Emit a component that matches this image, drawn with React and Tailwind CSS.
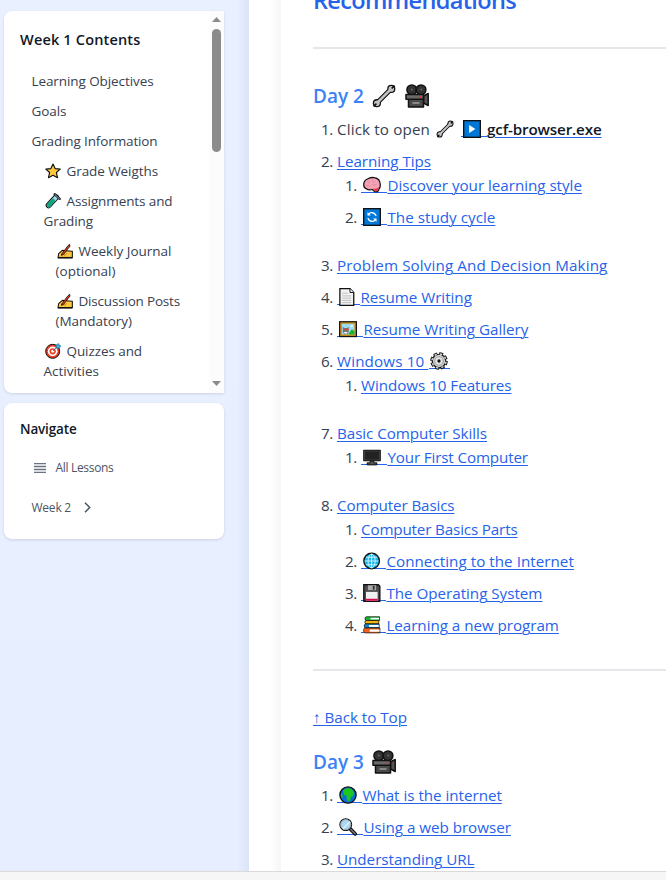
import { useLayoutEffect, useRef } from "react";

const K = "#111111";

const drawings = {
  star: (
    <path d="M12 1.5l3.2 6.9 7.6.8-5.7 5.1 1.7 7.7L12 18.3 5.2 22l1.7-7.7-5.7-5.1 7.6-.8z" fill="#ffc83d" stroke={K} strokeWidth="1.7" strokeLinejoin="round" />
  ),
  tube: (
    <g strokeLinejoin="round" strokeLinecap="round">
      <path d="M16.500 6.500L5.500 18.500" stroke={K} strokeWidth="9" />
      <path d="M16.500 6.500L5.500 18.500" stroke="#a7d8f0" strokeWidth="6" />
      <path d="M12 11.500L5.500 18.500" stroke="#10a37c" strokeWidth="6" />
      <path d="M14.500 1.800l7.500 7" stroke={K} strokeWidth="3.400" />
      <path d="M14.800 2.200l6.900 6.400" stroke="#a7d8f0" strokeWidth="1.200" />
    </g>
  ),
  writing: (
    <g strokeLinejoin="round">
      <path d="M1.500 22l1-6 5.500-5 5 .5 10 1V22z" fill="#ffc83d" stroke={K} strokeWidth="1.600" />
      <path d="M1.500 22h21.500" stroke={K} strokeWidth="2.200" />
      <path d="M7 16.500L16.500 4l2.500-2 .3 2.800L9.500 17.500l-3 1z" fill="#f03a17" stroke={K} strokeWidth="1.300" />
      <path d="M10.500 18.500c2-.5 3-1.500 4-3" stroke="#b06a12" strokeWidth="1.200" fill="none" />
    </g>
  ),
  target: (
    <g>
      <circle cx="11.500" cy="12.500" r="10.500" fill="#ee3b22" stroke={K} strokeWidth="1.500" />
      <circle cx="11.500" cy="12.500" r="7.300" fill="#fff" />
      <circle cx="11.500" cy="12.500" r="4.700" fill="#ee3b22" />
      <circle cx="11.500" cy="12.500" r="2.200" fill="#fff" />
      <path d="M12 12l5-5-.5-4 4-2 .5 2.500 2.500.5-2 4-4-.5" fill="#35b8ea" stroke="#1b5f83" strokeWidth="1" />
    </g>
  ),
  wrench: (
    <g strokeLinejoin="round" strokeLinecap="round">
      <path d="M5.500 18.500L18.500 5.500" stroke={K} strokeWidth="4.800" />
      <circle cx="19.300" cy="4.900" r="4.100" fill={K} />
      <circle cx="4.900" cy="19.200" r="4.100" fill={K} />
      <circle cx="19.300" cy="4.900" r="2.800" fill="#c3c3c3" />
      <circle cx="4.900" cy="19.200" r="2.800" fill="#c3c3c3" />
      <path d="M6 18L18 6" stroke="#c3c3c3" strokeWidth="2.500" />
      <path d="M20.300 3.900L22 2.200M3.900 20.200L2.200 21.900" stroke={K} strokeWidth="1.800" />
    </g>
  ),
  camera: (
    <g stroke={K} strokeWidth="1.500" strokeLinejoin="round">
      <circle cx="6.800" cy="5.800" r="4.900" fill="#333" />
      <circle cx="16" cy="5.800" r="4.900" fill="#333" />
      <path d="M18.500 12l4.700-2.500v12l-4.700-2.500z" fill="#555" />
      <path d="M3.500 15h15v8h-15z" fill="#4a4a4a" />
      <path d="M1 10.500h17.500v4.800H1z" fill="#6a6a6a" />
      <path d="M7.500 19h7" stroke="#aaa" strokeWidth="1.300" />
      <circle cx="15.500" cy="13" r="1" fill="#e33" stroke="none" />
      <path d="M6 5.500h1.500M15.500 5.500H17" stroke="#777" />
    </g>
  ),
  play: (
    <g>
      <rect x=".9" y=".9" width="22.200" height="22.200" fill="#0078d7" stroke={K} strokeWidth="1.800" />
      <path d="M8.200 6.800v10.400l8.300-5.200z" fill="#fff" />
    </g>
  ),
  cycle: (
    <g fill="none">
      <rect x=".9" y=".9" width="22.200" height="22.200" fill="#0078d7" stroke={K} strokeWidth="1.800" />
      <path d="M17.500 10.500A6 6 0 0 0 7 8.500M6.500 13.500A6 6 0 0 0 17 15.500" stroke="#fff" strokeWidth="1.900" />
      <path d="M6 5.500V10h4.500zM18 18.500V14h-4.500z" fill="#fff" />
    </g>
  ),
  brain: (
    <g strokeLinejoin="round">
      <path d="M1 12C.8 8 2.500 5.500 6 4c3-2 6-2.400 9-1.700 4.500.8 7.800 4.200 8 8.700.3 3-.3 4.700-1.700 6-.3 2.800-1.500 4.300-4 4.300-2 0-3.500-1.500-4.800-3.300-3 .8-6 .6-8-1C2.500 16.300 1 14.500 1 12z" fill="#f4a3b5" stroke={K} strokeWidth="1.700" />
      <path d="M13 17c3 .5 5.500-.5 8-2 0 3-1 5.500-3.700 5.500-1.800 0-3.200-1.500-4.300-3.500z" fill="#e0394c" />
      <path d="M5.500 8c1.500 1 3 .5 4-.5M12 5c0 2 1.500 3 3.500 2.500M4 13c2-.8 4 .2 5 1.500M12.500 11.500c2 1 4.500.6 6-1" stroke="#de7f94" strokeWidth="1.100" fill="none" />
    </g>
  ),
  page: (
    <g>
      <path d="M2.500.9h13.500l5 5v17.200H2.500z" fill="#f2f2f2" stroke={K} strokeWidth="1.700" />
      <path d="M16 1v5h5" fill="#fff" stroke={K} strokeWidth="1.300" />
      <path d="M5.500 7H13M5.500 10.500h12M5.500 13.500h12M5.500 16.500h12M5.500 19.500h12" stroke="#b5b5b5" strokeWidth="1.100" />
    </g>
  ),
  picture: (
    <g>
      <rect x=".8" y="2.300" width="22.400" height="19.800" fill="#c98a1c" stroke={K} strokeWidth="1.600" />
      <rect x="3.800" y="5" width="16.600" height="14.200" fill="#9bdcf5" />
      <path d="M12 19.200l5-7 3.400 2.500v4.500z" fill="#16b72b" />
      <circle cx="17" cy="8" r="1.500" fill="#fff" />
      <path d="M5 9l2 1.500h4L13 9v7l-2 3H7l-2-3z" fill="#777" />
      <path d="M5.500 12.500h7" stroke="#e83d30" strokeWidth="1.800" />
      <path d="M7 16h4v2H7z" fill="#fff" />
    </g>
  ),
  gear: (
    <g>
      <circle cx="12" cy="12" r="9.600" fill="none" stroke={K} strokeWidth="4.200" strokeDasharray="5.040 2.500" />
      <circle cx="12" cy="12" r="9" fill="#cfcfcf" stroke={K} strokeWidth="1.600" />
      <circle cx="12" cy="12" r="9.400" fill="none" stroke="#cfcfcf" strokeWidth="2" strokeDasharray="3.100 4.280" strokeDashoffset="-.9" />
      <circle cx="12" cy="12" r="5.600" fill="#e7e7e7" stroke="#888" strokeWidth="1" />
      <circle cx="12" cy="12" r="2.200" fill={K} />
    </g>
  ),
  monitor: (
    <g>
      <rect x=".2" y="2.400" width="23.600" height="15.200" rx="1" fill={K} />
      <rect x="1.900" y="4" width="20.200" height="12" fill="#222" stroke="#555" strokeWidth=".8" />
      <path d="M9.500 17.500h5v2.300h4v2.700h-13v-2.700h4z" fill="#555" stroke={K} strokeWidth="1.300" />
    </g>
  ),
  globe: (
    <g fill="none">
      <circle cx="11.500" cy="12" r="10.400" fill="#16b6e8" stroke={K} strokeWidth="1.800" />
      <g stroke="#e8faff" strokeWidth="1.100">
        <ellipse cx="11.500" cy="12" rx="4.700" ry="9.300" />
        <path d="M11.500 2.500v19M2.200 12h18.600M4 7h15M4 17h15" />
      </g>
    </g>
  ),
  floppy: (
    <g>
      <path d="M1 1h19.500l2 2v20H1z" fill="#4b4b4b" stroke={K} strokeWidth="1.700" />
      <path d="M6.500 1.700h11v6.500h-11z" fill="#aaa" />
      <path d="M13 2.500h2.500v5H13z" fill="#333" />
      <path d="M4 10.500h15.500v12H4z" fill="#f1f1f1" />
      <path d="M4 19.700h15.500v2.700H4z" fill="#d40b4c" />
    </g>
  ),
  books: (
    <g stroke={K} strokeWidth="1" strokeLinejoin="round">
      <path d="M4.500 1H22v5H4.500C2 6 2 1 4.500 1z" fill="#17b52f" />
      <path d="M10 3.500h11.500" stroke="#fff" strokeWidth="2.200" />
      <path d="M4 6h17v4.500H4C2 10.500 2 6 4 6z" fill="#f0b413" />
      <path d="M3.500 10.500h18V16h-18c-2.500 0-2.500-5.500 0-5.500z" fill="#1683c9" />
      <path d="M8 13.300h13" stroke="#fff" strokeWidth="2.600" />
      <path d="M3 16h19.500v6.500H3c-3 0-3-6.500 0-6.500z" fill="#f1641e" />
      <path d="M9 19.500h13" stroke="#fff" strokeWidth="3" />
    </g>
  ),
  earth: (
    <g>
      <circle cx="12" cy="12" r="10.800" fill="#0a6fd6" />
      <path d="M5.500 6C8 3 13 2 16.500 4L20 8l-1 5-3 1.500-1 4.500-3 2-2-4.500.5-3.500L6.500 12z" fill="#1ec71e" />
      <path d="M3 10l2 3-.5 3L2 13z" fill="#1ec71e" />
      <circle cx="12" cy="12" r="10.800" fill="none" stroke={K} strokeWidth="1.800" />
    </g>
  ),
  magnifier: (
    <g strokeLinecap="round">
      <path d="M15 14.500l6.700 6.700" stroke={K} strokeWidth="4.800" />
      <path d="M15.500 15l6 6" stroke="#777" strokeWidth="2" />
      <circle cx="9" cy="8.800" r="7.900" fill="#a9d7f3" stroke={K} strokeWidth="1.400" />
      <circle cx="9" cy="8.800" r="6.700" fill="none" stroke="#999" strokeWidth="1.100" />
      <path d="M6 13.500l8-8" stroke="#d6effc" strokeWidth="2.200" />
    </g>
  ),
};

// Colour pictogram that sits on the text line; the slot width is the glyph advance.
function Pictogram({ name, slot = "w-[22px] h-[24px]", size = "size-[18px]", line = false }) {
  return (
    <span className={`relative inline-flex shrink-0 items-center justify-center ${slot}`}>
      {line && <span className="absolute inset-x-0 bottom-[4px] h-px bg-[#2563eb]" />}
      <svg viewBox="0 0 24 24" className={`relative ${size}`}>{drawings[name]}</svg>
    </span>
  );
}

// Spreads its letters so that the run of text is `w` pixels wide.
function Run({ w, className = "", children }) {
  const ref = useRef(null);
  useLayoutEffect(() => {
    const el = ref.current;
    el.style.letterSpacing = "0px";
    const natural = el.getBoundingClientRect().width;
    el.style.letterSpacing = `${(w - natural) / el.textContent.length}px`;
  }, [w]);
  return <span ref={ref} className={`whitespace-pre ${className}`}>{children}</span>;
}

const UL = "underline decoration-1 underline-offset-[2px]";

function Link({ icon, slot, gap = "w-[4.4px]", w, children }) {
  return (
    <a className="inline-flex h-6 items-center text-[#2563eb]">
      {icon && <Pictogram name={icon} slot={slot} line />}
      {icon && <span className={`relative h-6 ${gap}`}><span className="absolute inset-x-0 bottom-[4px] h-px bg-[#2563eb]" /></span>}
      <Run w={w} className={UL}>{children}</Run>
    </a>
  );
}

function Item({ n, children, sub }) {
  return (
    <li className="mb-2">
      <div className="flex h-6 items-center">
        <span className="w-6 shrink-0 pr-[4px] text-right tracking-[-0.3px] text-[#374151]">{n}.</span>
        {children}
      </div>
      {sub && <ol className="pb-2 pl-6">{sub}</ol>}
    </li>
  );
}

function TocLine({ icon, w, children }) {
  return (
    <span className="flex h-5 items-center">
      {icon && <Pictogram name={icon} slot="mr-[4px] h-5 w-[19px]" size="size-[16px]" />}
      <Run w={w}>{children}</Run>
    </span>
  );
}

function Contents() {
  return (
    <section className="flex h-[382px] w-[220px] overflow-hidden rounded-l-lg bg-white shadow-[0_1px_3px_rgba(0,0,0,0.12)]">
      <div className="min-w-0 flex-1 pl-4 pt-[18px]">
        <h2 className="flex h-[22px] items-center text-[14.5px] font-semibold text-[#111827]"><Run w={120.500}>Week 1 Contents</Run></h2>
        <nav className="mt-5 flex flex-col gap-[10px] pl-[11.500px] text-[13.500px] text-[#374151]">
          <TocLine w={122}>Learning Objectives</TocLine>
          <TocLine w={35}>Goals</TocLine>
          <TocLine w={126}>Grading Information</TocLine>
          <div className="pl-3"><TocLine icon="star" w={91.500}>Grade Weigths</TocLine></div>
          <div className="pl-3">
            <TocLine icon="tube" w={106}>Assignments and</TocLine>
            <TocLine w={49.500}>Grading</TocLine>
          </div>
          <div className="pl-6">
            <TocLine icon="writing" w={93}>Weekly Journal</TocLine>
            <TocLine w={60}>(optional)</TocLine>
          </div>
          <div className="pl-6">
            <TocLine icon="writing" w={101.500}>Discussion Posts</TocLine>
            <TocLine w={76.500}>(Mandatory)</TocLine>
          </div>
          <div className="pl-3">
            <TocLine icon="target" w={75.500}>Quizzes and</TocLine>
            <TocLine w={55.500}>Activities</TocLine>
          </div>
        </nav>
      </div>
      <div className="flex w-[15px] flex-col items-center bg-[#fcfcfc]">
        <svg viewBox="0 0 9 5" className="mt-[6px] h-[5px] w-[9px]"><path d="M0 5L4.500 0 9 5z" fill="#8b8b8b" /></svg>
        <div className="mt-[7px] h-[123px] w-[9px] rounded-full bg-[#8b8b8b]" />
        <svg viewBox="0 0 9 5" className="mb-[7px] mt-auto h-[5px] w-[9px]"><path d="M0 0L4.500 5 9 0z" fill="#8b8b8b" /></svg>
      </div>
    </section>
  );
}

function Navigate() {
  return (
    <section className="mt-[10px] h-[136px] w-[220px] rounded-lg bg-white pl-4 pt-4 shadow-[0_1px_3px_rgba(0,0,0,0.12)]">
      <h2 className="flex h-5 items-center text-[13.500px] font-semibold text-[#111827]"><Run w={56.500}>Navigate</Run></h2>
      <div className="ml-[14px] mt-[19px] flex h-5 items-center text-[12px] text-[#4b5563]">
        <svg viewBox="0 0 12 10" className="mr-[9.500px] h-[10px] w-[12px]"><path d="M0 .5h12M0 3.500h12M0 6.500h12M0 9.500h12" stroke="#6b7280" strokeWidth="1.600" /></svg>
        <Run w={58}>All Lessons</Run>
      </div>
      <div className="ml-[11.500px] mt-5 flex h-5 items-center text-[12px] text-[#4b5563]">
        <Run w={39.500}>Week 2</Run>
        <svg viewBox="0 0 7 11" className="-mt-px ml-[13px] h-[11px] w-[7px]"><path d="M1 .7l4.700 4.800L1 10.300" fill="none" stroke="#4b5563" strokeWidth="1.500" /></svg>
      </div>
    </section>
  );
}

export default function App() {
  return (
    <div className="flex h-[880px] w-[666px] flex-col overflow-hidden bg-white font-['Open_Sans','Noto_Sans',sans-serif]">
      <div className="flex h-[871px] overflow-hidden">
        <aside className="flex w-[249px] shrink-0 bg-linear-to-b from-[#e9f0ff] to-[#e7eeff]">
          <div className="w-[237px] pl-1 pt-[11px]">
            <Contents />
            <Navigate />
          </div>
          <div className="flex-1 bg-linear-to-r from-[#dbe3f8]/0 to-[#dbe3f8]" />
        </aside>
        <div className="w-8 shrink-0 bg-linear-to-r from-white from-65% to-[#f6f6f6]" />
        <main className="min-w-0 flex-1 pl-8 text-[15.200px] leading-6 text-[#374151]">
          <h1 className="-mt-[16px] flex h-8 items-center text-[23.500px] font-semibold text-[#2563eb]"><Run w={203}>Recommendations</Run></h1>
          <hr className="mt-[31px] h-[2px] border-0 bg-[#e5e7eb]" />
          <h2 className="mt-[33px] flex h-7 items-center text-[19px] font-semibold text-[#3b82f6]">
            <Run w={51}>Day 2</Run>
            <Pictogram name="wrench" slot="ml-[6px] h-7 w-[27px]" size="size-[24px]" />
            <Pictogram name="camera" slot="ml-[6px] h-7 w-[27px]" size="size-[24px]" />
          </h2>
          <ol className="mt-[7px]">
            <Item n={1}>
              <Run w={93}>Click to open</Run>
              <Pictogram name="wrench" slot="ml-[4px] mr-[5px] h-6 w-[22px]" />
              <a className="inline-flex h-6 items-center font-semibold text-[#111827]">
                <Pictogram name="play" line />
                <span className="relative h-6 w-[4px]"><span className="absolute inset-x-0 bottom-[4px] h-px bg-[#2563eb]" /></span>
                <Run w={114.500} className="underline decoration-[#2563eb] decoration-1 underline-offset-[2px]">gcf-browser.exe</Run>
              </a>
            </Item>
            <Item n={2} sub={<>
              <Item n={1}><Link icon="brain" w={194.500}>Discover your learning style</Link></Item>
              <Item n={2}><Link icon="cycle" w={108}>The study cycle</Link></Item>
            </>}><Link w={94}>Learning Tips</Link></Item>
            <Item n={3}><Link w={270.500}>Problem Solving And Decision Making</Link></Item>
            <Item n={4}><Link icon="page" slot="h-6 w-[19px]" w={111.500}>Resume Writing</Link></Item>
            <Item n={5}><Link icon="picture" w={165}>Resume Writing Gallery</Link></Item>
            <Item n={6} sub={<Item n={1}><Link w={150.500}>Windows 10 Features</Link></Item>}>
              <Link w={91.500}>{"Windows 10 "}</Link>
              <Pictogram name="gear" slot="h-6 w-[21.500px]" line />
            </Item>
            <Item n={7} sub={<Item n={1}><Link icon="monitor" w={140.500}>Your First Computer</Link></Item>}>
              <Link w={150}>Basic Computer Skills</Link>
            </Item>
            <Item n={8} sub={<>
              <Item n={1}><Link w={156.500}>Computer Basics Parts</Link></Item>
              <Item n={2}><Link icon="globe" slot="h-6 w-[21px]" w={187.500}>Connecting to the Internet</Link></Item>
              <Item n={3}><Link icon="floppy" slot="h-6 w-[21px]" w={156}>The Operating System</Link></Item>
              <Item n={4}><Link icon="books" slot="h-6 w-[21px]" w={172.500}>Learning a new program</Link></Item>
            </>}><Link w={117.500}>Computer Basics</Link></Item>
          </ol>
          <hr className="mt-[16px] h-[2px] border-0 bg-[#e5e7eb]" />
          <div className="mt-[34px] flex h-6"><Link w={94}>↑ Back to Top</Link></div>
          <h2 className="mt-[19px] flex h-7 items-center text-[19px] font-semibold text-[#3b82f6]">
            <Run w={51}>Day 3</Run>
            <Pictogram name="camera" slot="ml-[6px] h-7 w-[27px]" size="size-[24px]" />
          </h2>
          <ol className="mt-[7px]">
            <Item n={1}><Link icon="earth" slot="h-6 w-[21px]" w={139.500}>What is the internet</Link></Item>
            <Item n={2}><Link icon="magnifier" w={147.500}>Using a web browser</Link></Item>
            <Item n={3}><Link w={137.500}>Understanding URL</Link></Item>
          </ol>
        </main>
      </div>
      <div className="h-[9px] border-t border-[#dadada] bg-[#f6f6f6]" />
    </div>
  );
}
